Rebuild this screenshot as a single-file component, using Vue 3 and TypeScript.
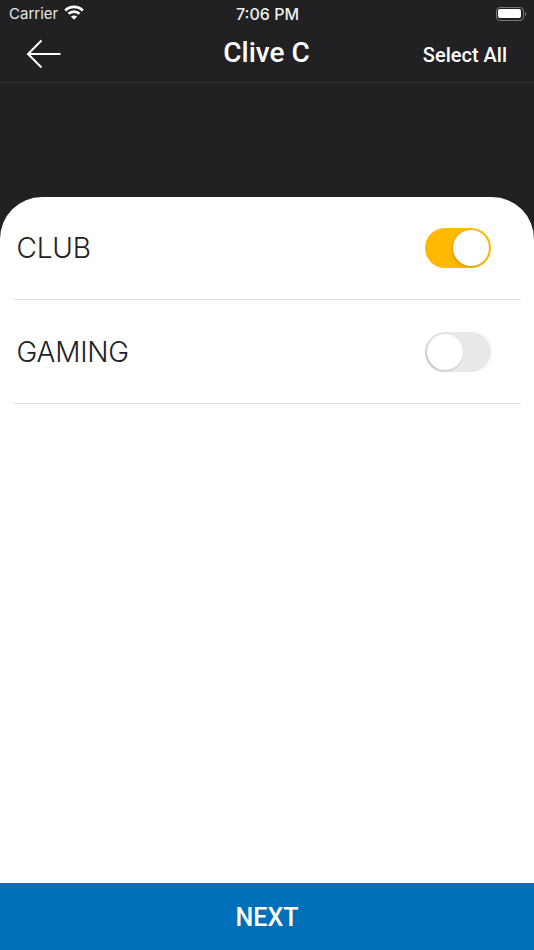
<script setup lang="ts">
import { ref } from 'vue'
const rows = ref([
  { name: 'CLUB', on: true },
  { name: 'GAMING', on: false },
])
</script>

<template>
  <div class="page">
    <div class="status">
      <div class="st-left">
        <span class="carrier">Carrier</span>
        <svg class="wifi" width="20" height="15" viewBox="0 0 20 15">
          <path d="M1.200 5.400C6 .8 14 .8 18.800 5.400" fill="none" stroke="#fff" stroke-width="2.800" />
          <path d="M4.500 8.800c3.200-2.900 7.800-2.900 11 0" fill="none" stroke="#fff" stroke-width="2.800" />
          <path d="M6.900 11.500c1.800-1.500 4.400-1.500 6.200 0L10 14.800z" fill="#fff" />
        </svg>
      </div>
      <span class="time">7:06 PM</span>
      <div class="battery">
        <span class="battery-body"><span class="battery-fill"></span></span>
        <span class="battery-tip"></span>
      </div>
    </div>
    <header class="nav">
      <svg class="back" width="36" height="30" viewBox="0 0 36 30">
        <path d="M34.500 15H2M15.500 1.500 2 15l13.500 13.500" fill="none" stroke="#fff" stroke-width="2" />
      </svg>
      <span class="title">Clive C</span>
      <span class="select">Select All</span>
    </header>
    <div class="spacer"></div>
    <main class="sheet">
      <div v-for="r in rows" :key="r.name" class="row">
        <span class="label">{{ r.name }}</span>
        <span class="toggle" :class="{ on: r.on }"><span class="knob"></span></span>
      </div>
    </main>
    <footer class="next">NEXT</footer>
  </div>
</template>

<style>
html, body { margin: 0; background: #fff; }
</style>

<style scoped>
.page {
  width: 534px;
  height: 950px;
  display: flex;
  flex-direction: column;
  background: #212123;
  overflow: hidden;
  font-family: Roboto, "Liberation Sans", sans-serif;
}
.status {
  height: 28px;
  padding: 0 8px 0 9px;
  display: grid;
  grid-template-columns: 1fr auto 1fr;
  align-items: center;
  color: #fff;
  flex: none;
}
.st-left { display: flex; align-items: center; gap: 6px; }
.carrier { font: 15px Inter, sans-serif; color: #e8e8e8; margin-top: -2px; }
.wifi { margin-top: -3px; }
.time { font: 500 16px Inter, sans-serif; color: #f0f0f0; }
.battery { justify-self: end; display: flex; align-items: center; margin-top: -1px; }
.battery-body {
  width: 28px;
  height: 14px;
  box-sizing: border-box;
  border: 1.500px solid #77777a;
  border-radius: 4px;
  padding: 1.500px;
  display: flex;
}
.battery-fill { flex: 1; background: #fff; border-radius: 2px; }
.battery-tip { width: 1.500px; height: 4px; background: #77777a; margin-left: 1px; border-radius: 0 1px 1px 0; }
.nav {
  height: 55px;
  flex: none;
  box-sizing: border-box;
  border-bottom: 1px solid #2b2b2d;
  padding: 0 27px 0 26px;
  display: grid;
  grid-template-columns: 1fr auto 1fr;
  align-items: center;
  color: #fff;
}
.back { margin-top: -3px; }
.title { font-size: 28px; font-weight: 500; margin-top: -5px; }
.select { justify-self: end; font-size: 20px; font-weight: 500; }
.spacer { height: 114px; flex: none; }
.sheet {
  flex: 1;
  background: #fff;
  border-radius: 42px 42px 0 0;
  padding: 0 13px;
}
.row {
  height: 103.400px;
  box-sizing: border-box;
  border-bottom: 1px solid #dfdfdf;
  padding: 0 30px 0 3.500px;
  display: flex;
  align-items: center;
  justify-content: space-between;
}
.label {
  font: 300 28px Inter, Roboto, sans-serif;
  color: #222;
  letter-spacing: -0.2px;
}
.toggle {
  width: 66px;
  height: 40px;
  border-radius: 20px;
  background: #e9e9e9;
  display: flex;
  align-items: center;
  padding: 0 2px;
  box-sizing: border-box;
}
.toggle.on { background: #ffb900; justify-content: flex-end; }
.knob {
  width: 36px;
  height: 36px;
  border-radius: 50%;
  background: #fff;
  box-shadow: -1px 1px 3px rgba(0, 0, 0, 0.2);
}
.next {
  height: 67px;
  flex: none;
  box-sizing: border-box;
  padding-top: 1px;
  background: #006fba;
  color: #fff;
  font-size: 25px;
  font-weight: 500;
  display: flex;
  align-items: center;
  justify-content: center;
}
</style>
